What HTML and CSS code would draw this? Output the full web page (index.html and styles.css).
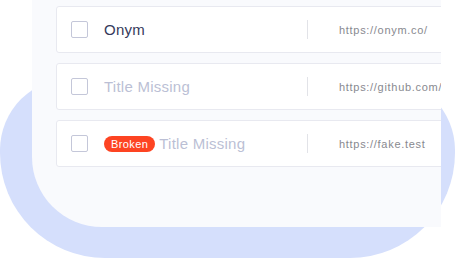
FILE: index.html
```html
<!DOCTYPE html>
<html lang="en">
<head>
    <meta charset="UTF-8">
    <meta name="viewport" content="width=device-width, initial-scale=1.0">
    <title>Links</title>
    <link rel="stylesheet" href="styles.css">
</head>
<body>
    <div class="scene">
        <div class="blob"></div> <!-- forma azul de fundo -->
        <div class="card">
            <div class="row">
                <span class="check"></span>
                <div class="title">Onym</div>
                <span class="sep"></span>
                <div class="url">https://onym.co/</div>
            </div>
            <div class="row">
                <span class="check"></span>
                <div class="title missing">Title Missing</div>
                <span class="sep"></span>
                <div class="url">https://github.com/</div>
            </div>
            <div class="row">
                <span class="check"></span>
                <div class="title missing"><span class="badge">Broken</span>Title Missing</div>
                <span class="sep"></span>
                <div class="url">https://fake.test</div>
            </div>
        </div>
    </div>
</body>
</html>
```

FILE: styles.css
```css
body, html {
    margin: 0;
    height: 100%;
    background: #ffffff;
    font-family: "Liberation Sans", Arial, sans-serif;
    overflow: hidden;
}

.scene {
    position: relative;
    width: 455px;
    height: 258px;
    overflow: hidden;
}

.blob {
    position: absolute;
    left: 0;
    top: 78px;
    width: 455px;
    height: 180px;
    background: #d5dffc;
    border-radius: 72px 72px 105px 105px;
}

.card {
    position: relative; /* fica por cima da forma azul */
    margin-left: 32px;
    width: 409px;
    margin-top: -40px;
    padding: 46px 0 60px 24px;
    box-sizing: border-box;
    background: #f9fafd;
    border-radius: 0 0 0 70px;
    overflow: hidden;
    display: flex;
    flex-direction: column;
    gap: 10px;
}

.row {
    display: flex;
    align-items: center;
    height: 47px;
    width: 500px;
    box-sizing: border-box;
    padding-left: 14px;
    background: #ffffff;
    border: 1px solid #e8e9f0;
    border-radius: 3px;
    flex-shrink: 0;
}

.check {
    width: 17px;
    height: 17px;
    box-sizing: border-box;
    border: 1px solid #c4c7d9;
    border-radius: 2px;
    flex-shrink: 0;
}

.title {
    margin-left: 16px;
    width: 203px;
    display: flex;
    align-items: center;
    font-size: 15px;
    letter-spacing: 0.25px;
    color: #363a5b;
}

.title.missing {
    color: #bbbfd5;
}

.badge {
    display: inline-block;
    height: 16px;
    line-height: 16px;
    padding: 0 7px 0 7px;
    margin-right: 4px;
    border-radius: 8px;
    background: #fd4422;
    color: #ffffff;
    font-size: 11px;
    letter-spacing: 0.4px;
}

.sep {
    width: 1px;
    height: 19px;
    background: #e2e3e8;
}

.url {
    margin-left: 31px;
    font-size: 11px;
    letter-spacing: 0.7px;
    color: #88898f;
    white-space: nowrap;
}
```
